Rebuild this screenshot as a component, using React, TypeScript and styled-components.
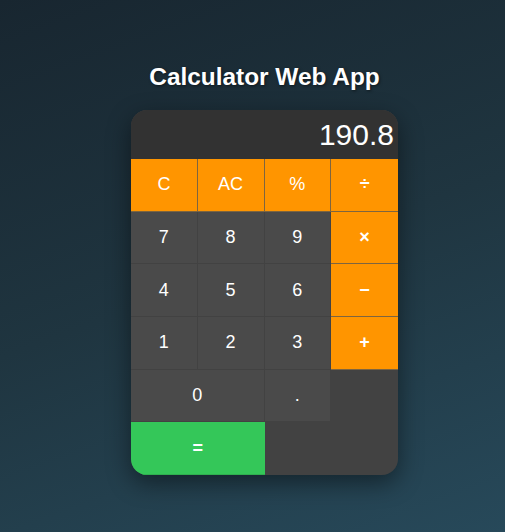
import React from "react";
import styled, { createGlobalStyle } from "styled-components";

const Global = createGlobalStyle`
  html, body { margin: 0; padding: 0; height: 100%; }
  body {
    font-family: "Liberation Sans", Arial, sans-serif;
    background: linear-gradient(160deg, #182630 0%, #1f3540 50%, #27495a 100%);
    min-height: 532px;
  }
`;

const Page = styled.div`
  display: flex;
  flex-direction: column;
  align-items: center;
  padding: 63px 0 0 24px;
`;

const Title = styled.h1`
  margin: 0 0 19px;
  color: #ffffff;
  font-size: 24.4px;
  font-weight: bold;
  line-height: 28px;
  text-shadow: 1px 1px 3px rgba(0, 0, 0, 0.5);
`;

const Card = styled.div`
  width: 267px;
  border-radius: 16px;
  overflow: hidden;
  background: #424242;
  box-shadow: 0 8px 24px rgba(0, 0, 0, 0.45);
`;

const Display = styled.div`
  height: 49px;
  background: #323232;
  color: #ffffff;
  font-size: 30px;
  line-height: 49px;
  text-align: right;
  padding-right: 4px;
  box-sizing: border-box;
`;

const Keys = styled.div`
  display: grid;
  grid-template-columns: repeat(4, 1fr);
  grid-auto-rows: 52.67px;
`;

type Kind = "num" | "op" | "eq";

const Key = styled.button<{ $kind: Kind; $span?: number; $last?: boolean; $bold?: boolean }>`
  grid-column: span ${(p) => p.$span ?? 1};
  box-sizing: border-box;
  margin: 0;
  padding: 0;
  border: none;
  border-right: ${(p) => (p.$last ? "none" : "1px solid")};
  border-bottom: 1px solid;
  border-color: ${(p) =>
    p.$kind === "op" ? "#7d6540" : p.$kind === "eq" ? "#2fb04f" : "#424242"};
  background: ${(p) =>
    p.$kind === "op" ? "#ff9500" : p.$kind === "eq" ? "#34c759" : "#4a4a4a"};
  color: #ffffff;
  font-family: "Liberation Sans", Arial, sans-serif;
  font-size: 18px;
  font-weight: ${(p) => (p.$bold ? "bold" : "normal")};
  display: flex;
  align-items: center;
  justify-content: center;
  cursor: pointer;
`;

type K = { label: string; kind: Kind; span?: number; last?: boolean; bold?: boolean };

const keys: K[] = [
  { label: "C", kind: "op" },
  { label: "AC", kind: "op" },
  { label: "%", kind: "op" },
  { label: "÷", kind: "op", last: true, bold: true },
  { label: "7", kind: "num" },
  { label: "8", kind: "num" },
  { label: "9", kind: "num" },
  { label: "×", kind: "op", last: true, bold: true },
  { label: "4", kind: "num" },
  { label: "5", kind: "num" },
  { label: "6", kind: "num" },
  { label: "−", kind: "op", last: true, bold: true },
  { label: "1", kind: "num" },
  { label: "2", kind: "num" },
  { label: "3", kind: "num" },
  { label: "+", kind: "op", last: true, bold: true },
  { label: "0", kind: "num", span: 2 },
  { label: ".", kind: "num" },
];

const Empty = styled.div``;

export default function App() {
  return (
    <>
      <Global />
      <Page>
        <Title>Calculator Web App</Title>
        <Card>
          <Display>190.8</Display>
          <Keys>
            {keys.map((k, i) => (
              <Key key={i} $kind={k.kind} $span={k.span} $last={k.last} $bold={k.bold}>
                {k.label}
              </Key>
            ))}
            <Empty />
            <Key $kind="eq" $span={2} $last $bold>
              =
            </Key>
          </Keys>
        </Card>
      </Page>
    </>
  );
}
